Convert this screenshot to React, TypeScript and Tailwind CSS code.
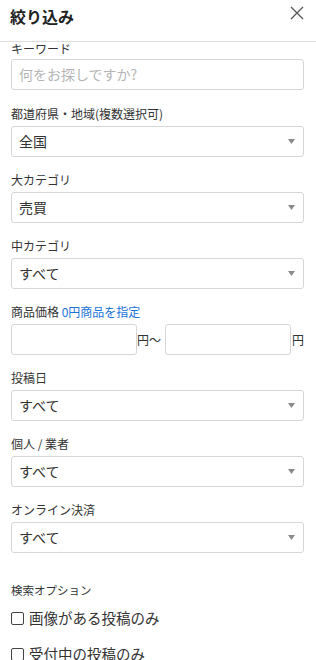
const font = { fontFamily: '"Noto Sans CJK JP", "Noto Sans", sans-serif' };

function Caret() {
  return (
    <svg width="7" height="5" viewBox="0 0 7 5" className="shrink-0">
      <path d="M0 0 L7 0 L3.5 5 Z" fill="#8a8a8a" />
    </svg>
  );
}

function Select({ value }: { value: string }) {
  return (
    <div className="flex h-[31px] items-center justify-between rounded-[3px] border border-[#d6d6d6] bg-white pl-[7px] pr-[8px] text-[14px] text-[#333]">
      <span>{value}</span>
      <Caret />
    </div>
  );
}

function Label({ children }: { children: React.ReactNode }) {
  return <div className="h-[18px] text-[12px] leading-[18px] text-[#333]">{children}</div>;
}

function Field({ label, value }: { label: string; value: string }) {
  return (
    <div className="mb-[14px]">
      <Label>{label}</Label>
      <div className="mt-[3px]">
        <Select value={value} />
      </div>
    </div>
  );
}

function Check({ text }: { text: string }) {
  return (
    <label className="flex h-[20px] items-center gap-[5px] text-[14.5px] text-[#333]">
      <span className="h-[13px] w-[13px] rounded-[2px] border border-[#444] bg-white" />
      <span>{text}</span>
    </label>
  );
}

export default function App() {
  return (
    <div className="h-[660px] w-[316px] overflow-hidden bg-white" style={font}>
      <header className="flex h-[42px] items-start justify-between border-b border-[#dcdcdc] pl-[10px] pr-[12px]">
        <h1 className="pt-[5px] text-[16px] font-bold leading-[22px] text-[#222]">絞り込み</h1>
        <svg width="14" height="14" viewBox="0 0 14 14" className="mt-[6px]">
          <path d="M1 1 L13 13 M13 1 L1 13" stroke="#555" strokeWidth="1.3" />
        </svg>
      </header>

      <main className="pl-[11px] pr-[12px]">
        <div className="mb-[15px]">
          <div className="h-[17px] text-[12px] leading-[14px] text-[#333]">キーワード</div>
          <div className="flex h-[31px] items-center rounded-[3px] border border-[#d6d6d6] pl-[7px] text-[14px] text-[#b5b5b5]">
            何をお探しですか?
          </div>
        </div>

        <Field label="都道府県・地域(複数選択可)" value="全国" />
        <Field label="大カテゴリ" value="売買" />
        <Field label="中カテゴリ" value="すべて" />

        <div className="mb-[14px]">
          <Label>
            商品価格 <span className="text-[#1a73d9]">0円商品を指定</span>
          </Label>
          <div className="mt-[3px] flex items-center text-[12px] text-[#333]">
            <div className="h-[31px] w-[126px] rounded-[3px] border border-[#d6d6d6]" />
            <span className="w-[28px]">円～</span>
            <div className="h-[31px] w-[126px] rounded-[3px] border border-[#d6d6d6]" />
            <span className="ml-[1px]">円</span>
          </div>
        </div>

        <Field label="投稿日" value="すべて" />
        <Field label="個人 / 業者" value="すべて" />
        <Field label="オンライン決済" value="すべて" />

        <div className="mt-[28px] text-[11.5px] leading-[18px] text-[#333]">検索オプション</div>
        <div className="mt-[9px] flex flex-col gap-[16px]">
          <Check text="画像がある投稿のみ" />
          <Check text="受付中の投稿のみ" />
        </div>
      </main>
    </div>
  );
}
